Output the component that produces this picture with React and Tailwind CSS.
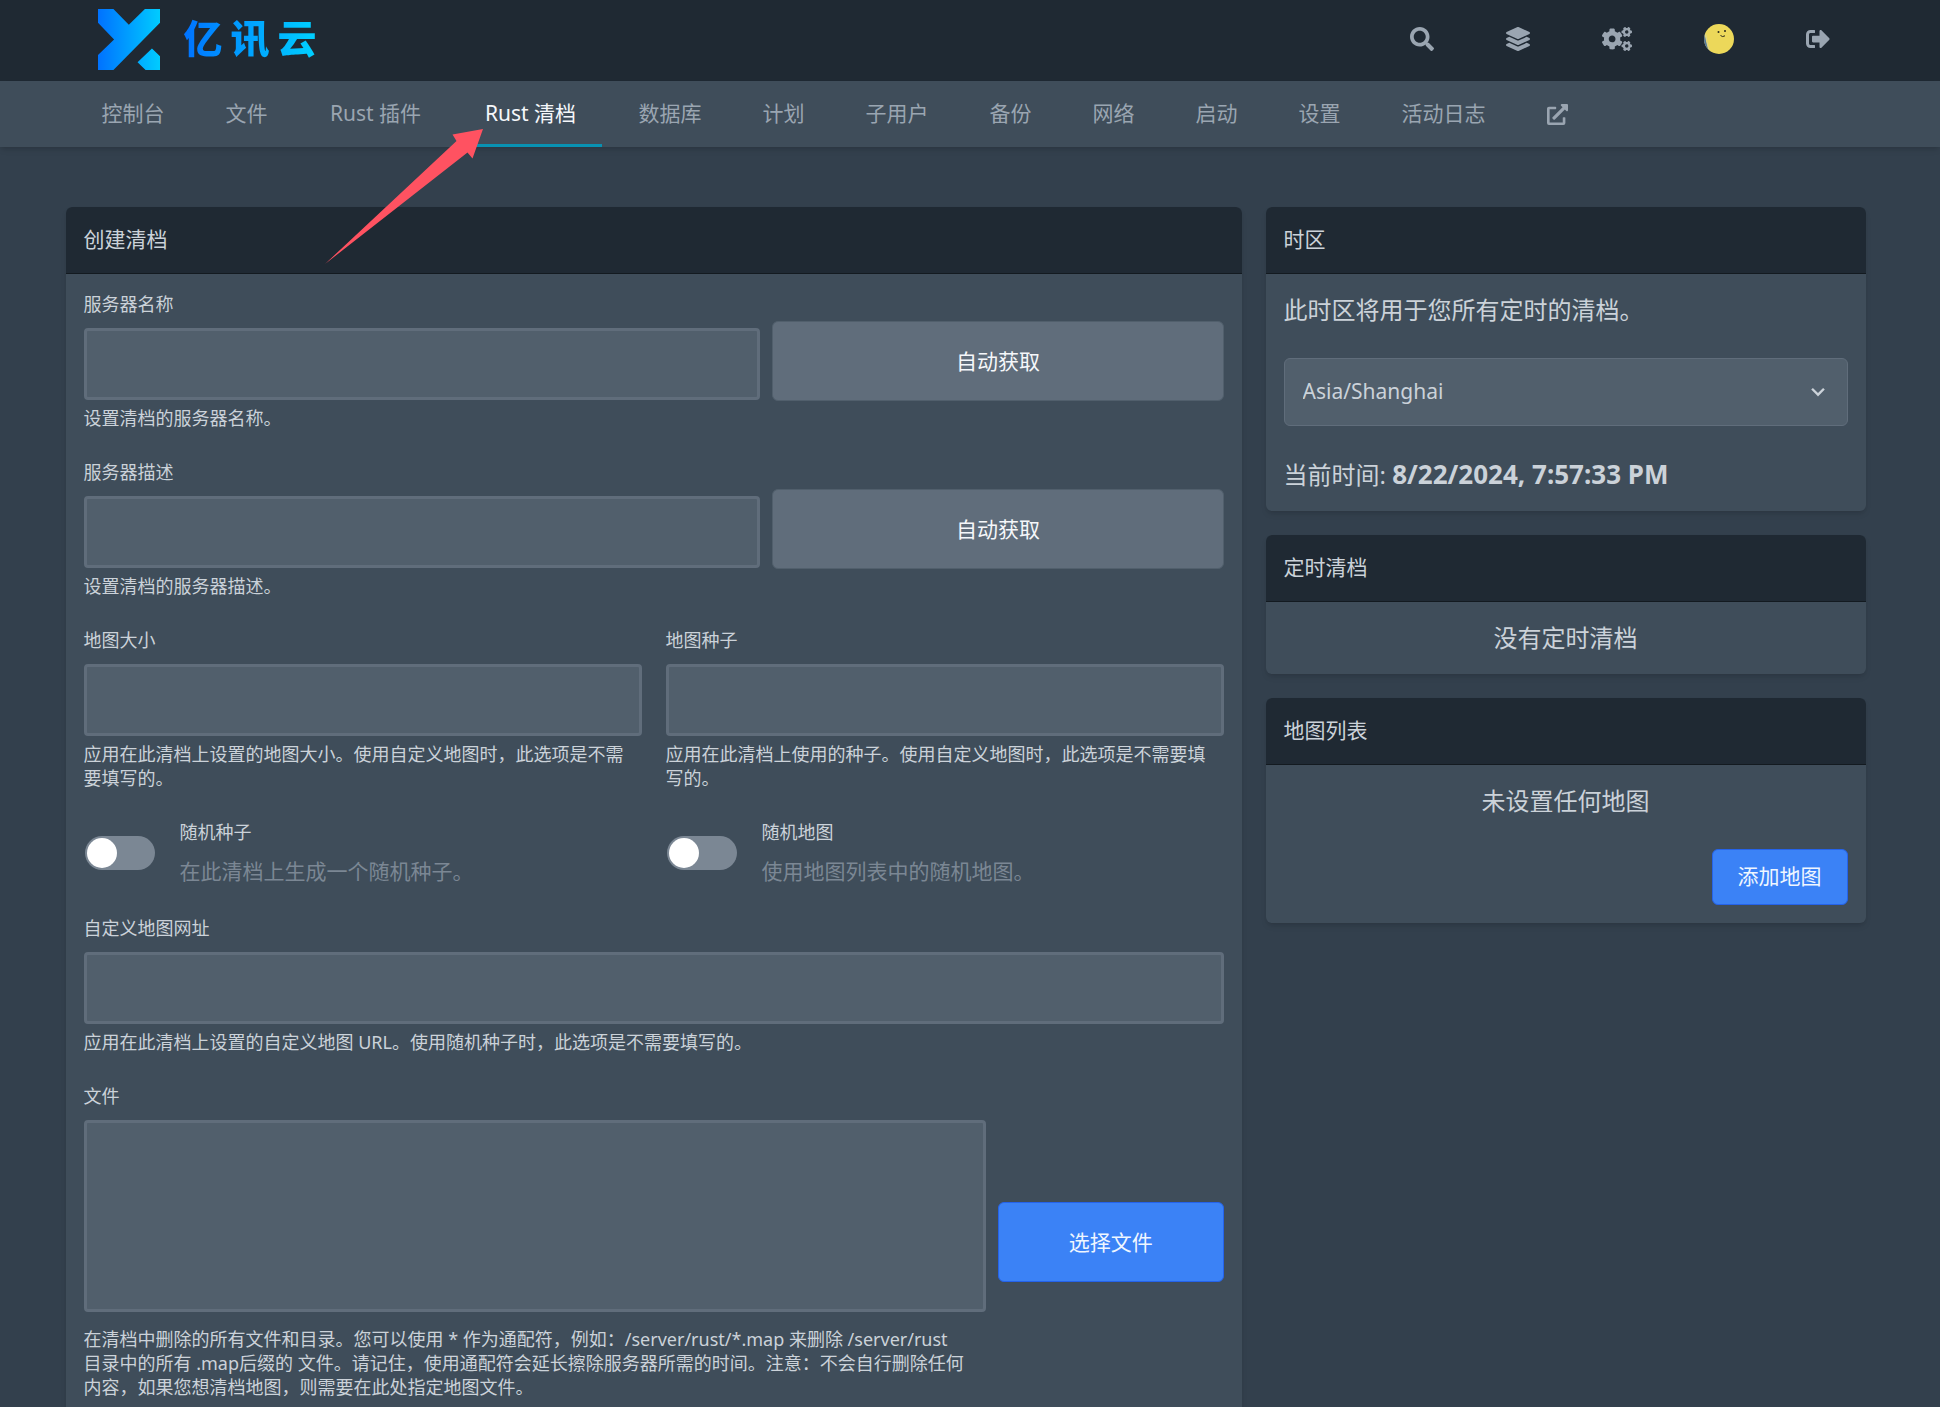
import { FaSearch, FaLayerGroup, FaCogs, FaSignOutAlt, FaExternalLinkAlt } from 'react-icons/fa';

const navLinks = [
  { name: '控制台' },
  { name: '文件' },
  { name: 'Rust 插件', wide: true },
  { name: 'Rust 清档', wide: true, active: true },
  { name: '数据库' },
  { name: '计划' },
  { name: '子用户' },
  { name: '备份' },
  { name: '网络' },
  { name: '启动' },
  { name: '设置' },
  { name: '活动日志' },
];

const inputClass =
  'block w-full rounded border-[3px] border-[#606d7b] bg-[#515f6c] px-4 text-[21px] text-[#cbd2d9] outline-none';

const Logo = () => (
  <a href="#" aria-label="亿讯云" className="flex items-center gap-6 pb-0.5 pl-8">
    <svg viewBox="24 27 185 182" className="h-[61px] w-[62px]">
      <defs>
        <linearGradient id="logo-fill" x1="24" x2="209" y1="0" y2="0" gradientUnits="userSpaceOnUse">
          <stop offset="0" stopColor="#0072ff" />
          <stop offset="1" stopColor="#00ccff" />
        </linearGradient>
      </defs>
      <path
        fill="url(#logo-fill)"
        d="M24 27H70L116 74L164 27H209V68L70 209H24V164L72 118L24 68ZM185 145L209 168V209H166L142 186Z"
      />
    </svg>
    <span className="flex gap-2 bg-gradient-to-r from-[#0072ff] to-[#00d0ff] bg-clip-text pb-1 text-[39px] leading-[60px] font-black text-transparent">
      <span>亿</span>
      <span>讯</span>
      <span>云</span>
    </span>
  </a>
);

const Avatar = () => (
  <svg viewBox="0 0 30 30" className="size-[30px] rounded-full">
    <rect width="30" height="30" fill="#ecd85a" />
    <path d="M0 10C2 14 2 20 5 27L0 30Z" fill="#54779c" />
    <path d="M1.5 10C3 15 3 20 5.5 27" fill="none" stroke="#c8d0c0" strokeWidth="0.6" />
    <circle cx="14.5" cy="8" r="1" fill="#2b2a1d" />
    <circle cx="21" cy="7" r="1" fill="#2b2a1d" />
    <path d="M16.5 11.5Q18.5 13.5 21 11.8" fill="none" stroke="#2b2a1d" strokeWidth="1" />
  </svg>
);

const Header = () => (
  <header className="bg-[#1f2933] pr-[9px]">
    <div className="mx-auto flex h-[81px] max-w-[1800px] items-center justify-between">
      <Logo />
      <div className="flex h-full items-center pb-1 text-[#9aa5b1]">
        <button aria-label="搜索" className="px-9"><FaSearch className="size-6" /></button>
        <a href="#" aria-label="服务器" className="px-9"><FaLayerGroup className="size-6" /></a>
        <a href="#" aria-label="管理" className="px-9"><FaCogs className="h-6 w-[30px]" /></a>
        <a href="#" aria-label="账户" className="px-9"><Avatar /></a>
        <button aria-label="退出" className="px-9"><FaSignOutAlt className="size-6" /></button>
      </div>
    </div>
  </header>
);

const tabClass = ({ wide, active }) =>
  [
    'flex items-center justify-center border-b-[3px] px-6 pt-[3px] whitespace-nowrap',
    wide && 'min-w-[142px]',
    active ? 'border-[#0891b2] text-[#f5f7fa]' : 'border-transparent',
  ]
    .filter(Boolean)
    .join(' ');

const SubNav = () => (
  <nav className="bg-[#3f4d5a] pr-[9px] shadow-md">
    <div className="mx-auto flex h-[66px] max-w-[1800px] gap-[13px] px-3 text-[21px] text-[#9aa5b1]">
      {navLinks.map((link) => (
        <a key={link.name} href="#" className={tabClass(link)}>
          {link.name}
        </a>
      ))}
      <a href="#" aria-label="在管理面板中打开" className="flex items-center px-6">
        <FaExternalLinkAlt className="size-[21px]" />
      </a>
    </div>
  </nav>
);

const Card = ({ title, children }) => (
  <section className="rounded-md bg-[#3f4d5a] shadow-md">
    <h2 className="flex h-[67px] items-center rounded-t-md border-b border-[#131a20] bg-[#1f2933] px-[18px] text-[21px]">
      {title}
    </h2>
    <div className="p-[18px]">{children}</div>
  </section>
);

const Field = ({ id, label, help }) => (
  <div>
    <label htmlFor={id} className="mb-3 block">{label}</label>
    <input id={id} type="text" className={`${inputClass} h-[72px]`} />
    <p className="mt-1.5 pr-2">{help}</p>
  </div>
);

const AutoButton = () => (
  <button className="h-20 rounded-md border border-[#515f6c] bg-[#606d7b] text-[21px] text-[#f5f7fa]">
    自动获取
  </button>
);

const Toggle = ({ id, label, description }) => (
  <div className="flex items-center gap-6">
    <div className="flex w-[72px] justify-center">
      <input
        id={id}
        type="checkbox"
        className="h-[34px] w-[70px] appearance-none rounded-full bg-[#7b8794] p-0.5 before:block before:size-[30px] before:rounded-full before:bg-white checked:bg-[#0891b2] checked:before:ml-9"
      />
    </div>
    <div>
      <label htmlFor={id} className="block">{label}</label>
      <p className="mt-3 text-[21px] leading-[30px] text-[#7b8794]">{description}</p>
    </div>
  </div>
);

const WipeForm = () => (
  <form className="flex flex-col gap-[30px] text-[18px] leading-6" onSubmit={(e) => e.preventDefault()}>
    <div className="grid grid-cols-[3fr_2fr] items-center gap-3">
      <Field id="server-name" label="服务器名称" help="设置清档的服务器名称。" />
      <AutoButton />
    </div>
    <div className="grid grid-cols-[3fr_2fr] items-center gap-3">
      <Field id="server-description" label="服务器描述" help="设置清档的服务器描述。" />
      <AutoButton />
    </div>
    <div className="grid grid-cols-2 gap-6">
      <Field
        id="map-size"
        label="地图大小"
        help="应用在此清档上设置的地图大小。使用自定义地图时，此选项是不需要填写的。"
      />
      <Field
        id="map-seed"
        label="地图种子"
        help="应用在此清档上使用的种子。使用自定义地图时，此选项是不需要填写的。"
      />
    </div>
    <div className="grid grid-cols-2 gap-6">
      <Toggle id="random-seed" label="随机种子" description="在此清档上生成一个随机种子。" />
      <Toggle id="random-map" label="随机地图" description="使用地图列表中的随机地图。" />
    </div>
    <Field
      id="map-url"
      label="自定义地图网址"
      help="应用在此清档上设置的自定义地图 URL。使用随机种子时，此选项是不需要填写的。"
    />
    <div className="grid grid-cols-[4fr_1fr] items-center gap-3">
      <div>
        <label htmlFor="files" className="mb-3 block">文件</label>
        <textarea id="files" className={`${inputClass} h-48 resize-none`} />
        <p className="mt-[15px] pr-2">
          在清档中删除的所有文件和目录。您可以使用 * 作为通配符，例如：/server/rust/*.map 来删除 /server/rust
          <br />
          目录中的所有 .map后缀的 文件。请记住，使用通配符会延长擦除服务器所需的时间。注意：不会自行删除任何内容，如果您想清档地图，则需要在此处指定地图文件。
        </p>
      </div>
      <button className="h-20 rounded-md border border-[#2563eb] bg-[#3b82f6] text-[21px] text-[#eff6ff]">
        选择文件
      </button>
    </div>
  </form>
);

const TimezoneCard = () => (
  <Card title="时区">
    <label htmlFor="timezone" className="block text-2xl leading-9">此时区将用于您所有定时的清档。</label>
    <div className="relative my-[30px]">
      <select
        id="timezone"
        className="block h-[68px] w-full appearance-none rounded-md border border-[#606d7b] bg-[#515f6c] px-[18px] text-[21px] text-[#cbd2d9]"
      >
        <option>Asia/Shanghai</option>
      </select>
      <svg
        viewBox="0 0 20 20"
        fill="currentColor"
        className="pointer-events-none absolute top-1/2 right-[18px] size-6 -translate-y-1/2"
      >
        <path d="M9.293 12.95l.707.707L15.657 8l-1.414-1.414L10 10.828 5.757 6.586 4.343 8z" />
      </svg>
    </div>
    <p className="text-2xl leading-9">
      当前时间: <strong className="text-[26px] leading-9">8/22/2024, 7:57:33 PM</strong>
    </p>
  </Card>
);

// Points at the active tab of the sub navigation
const PointerArrow = () => (
  <svg viewBox="0 0 158 136" className="pointer-events-none absolute top-[129px] left-[325px] h-[136px] w-[158px]">
    <path d="M158 0L127.500 5.500L131.500 12L0 135L142.500 23.500L147.500 29.500Z" fill="#ff5261" />
  </svg>
);

export default function App() {
  return (
    <div className="relative h-screen overflow-y-auto bg-[#33404d] font-['Noto_Sans','Noto_Sans_CJK_SC',sans-serif] text-[#cbd2d9] [scrollbar-width:none]">
      <Header />
      <SubNav />
      <main className="pt-[60px] pr-[9px] pb-12">
        <div className="mx-auto grid max-w-[1800px] grid-cols-[minmax(0,1fr)_600px] items-start gap-6">
          <Card title="创建清档">
            <WipeForm />
          </Card>
          <div className="flex flex-col gap-6">
            <TimezoneCard />
            <Card title="定时清档">
              <p className="text-center text-2xl leading-9">没有定时清档</p>
            </Card>
            <Card title="地图列表">
              <p className="text-center text-2xl leading-9">未设置任何地图</p>
              <div className="mt-[30px] flex justify-end">
                <button className="h-14 rounded-md border border-[#2563eb] bg-[#3b82f6] px-[25px] text-[21px] text-[#eff6ff]">
                  添加地图
                </button>
              </div>
            </Card>
          </div>
        </div>
      </main>
      <PointerArrow />
    </div>
  );
}
